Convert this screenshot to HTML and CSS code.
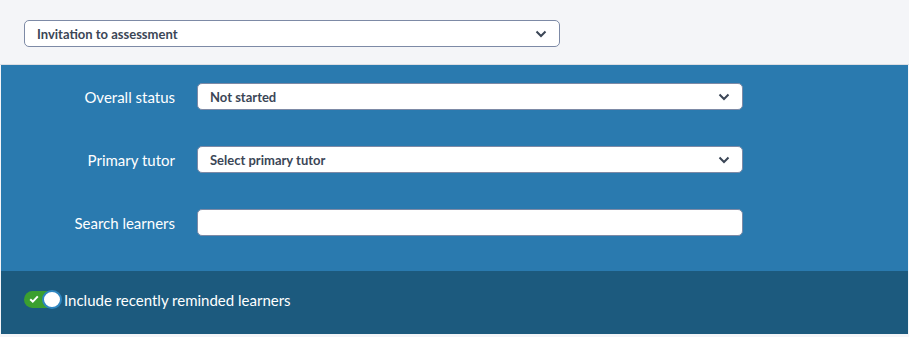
FILE: index.html
```html
<html lang="en">
  <head>
    <meta charset="UTF-8">
    <title>Reminders</title>
    <link rel="stylesheet" href="styles.css">
  </head>
  <body>
    <header class="top">
      <div class="select select-wide">
        <span>Invitation to assessment</span>
        <svg class="chev" viewBox="0 0 12 8"><path d="M1.5 1.5 6 6l4.5-4.5"/></svg>
      </div>
    </header>

    <section class="filters">
      <div class="row">
        <label>Overall status</label>
        <div class="select">
          <span>Not started</span>
          <svg class="chev" viewBox="0 0 12 8"><path d="M1.5 1.5 6 6l4.5-4.5"/></svg>
        </div>
      </div>
      <div class="row">
        <label>Primary tutor</label>
        <div class="select">
          <span>Select primary tutor</span>
          <svg class="chev" viewBox="0 0 12 8"><path d="M1.5 1.5 6 6l4.5-4.5"/></svg>
        </div>
      </div>
      <div class="row">
        <label>Search learners</label>
        <div class="select"></div>
      </div>
    </section>

    <section class="options">
      <div class="toggle">
        <svg class="tick" viewBox="0 0 10 8"><path d="M1.2 4.2 3.8 6.6 8.8 1.4"/></svg>
        <span class="knob"></span>
      </div>
      <span class="opt-label">Include recently reminded learners</span>
    </section>
  </body>
</html>
```

FILE: styles.css
```css
* {
  margin: 0;
  padding: 0;
  box-sizing: border-box;
}

body {
  background-color: #f4f5f8;
  font-family: Lato, "Open Sans", sans-serif;
  color: #fff;
}

.top {
  height: 65px;
  padding: 20px 24px 0;
  border-bottom: 1px solid #dcdee3;
}

.select {
  display: flex;
  align-items: center;
  justify-content: space-between;
  width: 546px;
  height: 27px;
  padding: 0 12px;
  background-color: #fff;
  border: 1px solid #7d8aa6;
  border-radius: 5px;
  color: #3b4656;
  font-size: 13px;
  font-weight: bold;
}

.select-wide {
  width: 536px;
}

.chev {
  width: 12px;
  height: 8px;
  fill: none;
  stroke: #3b4656;
  stroke-width: 2;
}

.filters {
  margin: 0 1px;
  padding: 18px 0 35px;
  background-color: #2a7aaf;
  display: flex;
  flex-direction: column;
  gap: 36px;
}

.row {
  display: flex;
  align-items: center;
  gap: 22px;
}

.row label {
  width: 174px;
  text-align: right;
  font-size: 15px;
}

.options {
  margin: 0 1px;
  height: 63px;
  padding: 0 0 6px 23px;
  background-color: #1c5a7e;
  display: flex;
  align-items: center;
  gap: 3px;
}

.toggle {
  position: relative;
  width: 37px;
  height: 17px;
  border-radius: 9px;
  background-color: #3b9f2f;
}

.tick {
  position: absolute;
  left: 5px;
  top: 4px;
  width: 10px;
  height: 8px;
  fill: none;
  stroke: #fff;
  stroke-width: 2;
}

.knob {
  position: absolute;
  right: -1px;
  top: -1px;
  width: 20px;
  height: 19px;
  border-radius: 50%;
  background-color: #fff;
  border: 2px solid #2f86c0;
}

.opt-label {
  font-size: 15px;
}
```
